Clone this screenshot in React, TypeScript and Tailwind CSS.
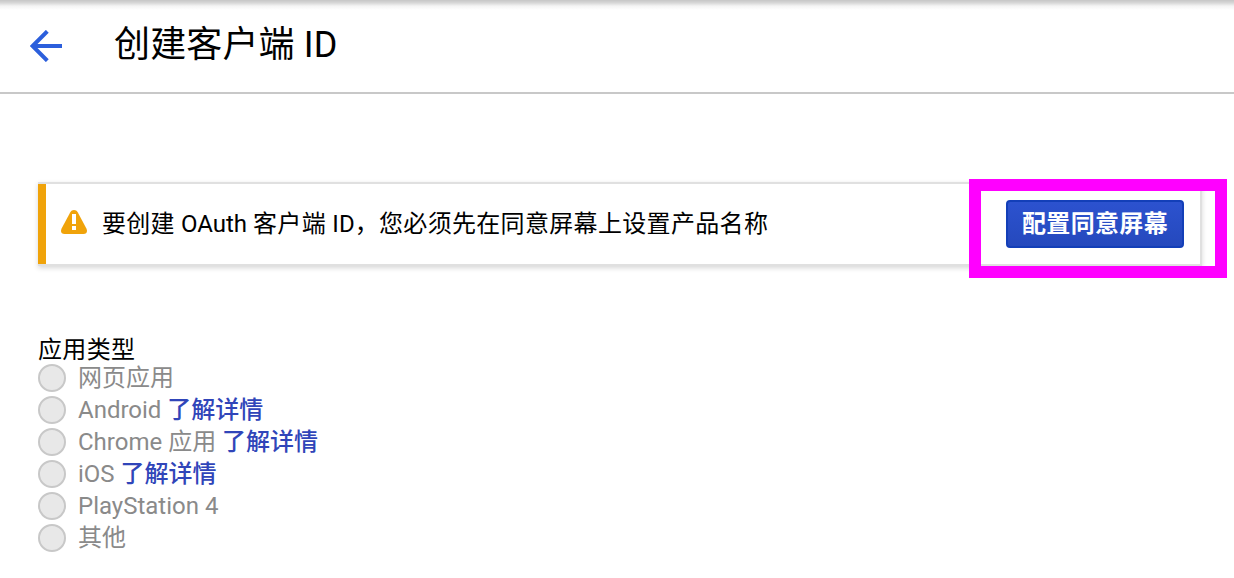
import React from 'react'

interface AppType {
    cjk?: string
    latin?: string
    hasLink?: boolean
}

const appTypes: AppType[] = [
    { cjk: '网页应用' },
    { latin: 'Android ', hasLink: true },
    { latin: 'Chrome ', cjk: '应用 ', hasLink: true },
    { latin: 'iOS ', hasLink: true },
    { latin: 'PlayStation 4' },
    { cjk: '其他' },
]

const BackArrow = () => (
    <svg viewBox="0 0 32 32" className="h-8 w-8" fill="none" stroke="#2c5fdc" strokeWidth="4">
        <path d="M32 16H3M17.3 1.3L2.6 16l14.7 14.7" />
    </svg>
)

const WarningIcon = () => (
    <svg viewBox="0 0 26 24" className="h-6 w-[26px]">
        <path
            d="M9.3 2.2C10.2 .7 11.4 0 13 0s2.8.7 3.7 2.2L25.4 18.6C26.8 21.6 25.6 24 22.4 24H3.6C.4 24-.8 21.6.6 18.6Z"
            fill="#f0a30a"
        />
        <path d="M11 4h4v10h-4zM11 16h4v4h-4z" fill="#fff" />
    </svg>
)

const App: React.FC = () => {
    return (
        <div className="h-[578px] overflow-hidden bg-white font-['Roboto','Noto_Sans_CJK_SC',sans-serif] text-2xl text-black">
            <header className="flex h-[94px] border-b-2 border-[#c8c8c8] bg-[linear-gradient(to_bottom,#c6c6c6_0px,#d8d8d8_3px,#f4f4f4_6px,#ffffff_10px)] pl-[30px]">
                <button className="mt-[30px] h-8 w-8" aria-label="返回">
                    <BackArrow />
                </button>
                <h1 className="ml-[52px] mt-[23px] text-4xl leading-[44px] tracking-[0.15px] whitespace-nowrap">创建客户端 ID</h1>
            </header>

            <main className="px-[38px] pt-[88px]">
                <div className="relative flex h-[84px] w-[1164px] items-center border-y-2 border-r-2 border-[#e0e0e0] shadow-[0_2px_5px_rgba(0,0,0,0.16)]">
                    <div className="h-20 w-2 bg-[#f0a30a]" />
                    <div className="ml-[15px] -mt-1">
                        <WarningIcon />
                    </div>
                    <p className="ml-[15px] whitespace-nowrap leading-8">
                        <span className="tracking-[0.25px]">要创建 </span>OAuth <span className="tracking-[0.35px]">客户端 </span>ID
                        <span className="tracking-[0.33px]">，您必须先在同意屏幕上设置产品名称</span>
                    </p>
                    <button className="ml-auto mr-4 h-12 w-[178px] rounded-[4px] border-2 border-[#133fb8] bg-linear-to-b from-[#2c52cf] to-[#2549bd] font-bold leading-8 tracking-[0.35px] whitespace-nowrap text-white">
                        配置同意屏幕
                    </button>
                    <div className="pointer-events-none absolute -top-[5px] left-[931px] h-[99px] w-[258px] border-[12px] border-[#ff00ff]" />
                </div>

                <h2 className="mt-[68px] h-7 leading-8 tracking-[0.35px]">应用类型</h2>
                <ul>
                    {appTypes.map((type, i) => (
                        <li key={i} className="flex h-8 items-center whitespace-nowrap text-[#8a8a8a]">
                            <span className="h-7 w-7 rounded-full border-2 border-[#c8c8c8] bg-[#e8e8e8]" />
                            <p className="ml-3 leading-8 whitespace-pre">
                                {type.latin}
                                {type.cjk}
                                {type.hasLink && (
                                    <a href="#" className="font-medium text-[#3045b9]">
                                        了解详情
                                    </a>
                                )}
                            </p>
                        </li>
                    ))}
                </ul>
            </main>
        </div>
    )
}

export default App
